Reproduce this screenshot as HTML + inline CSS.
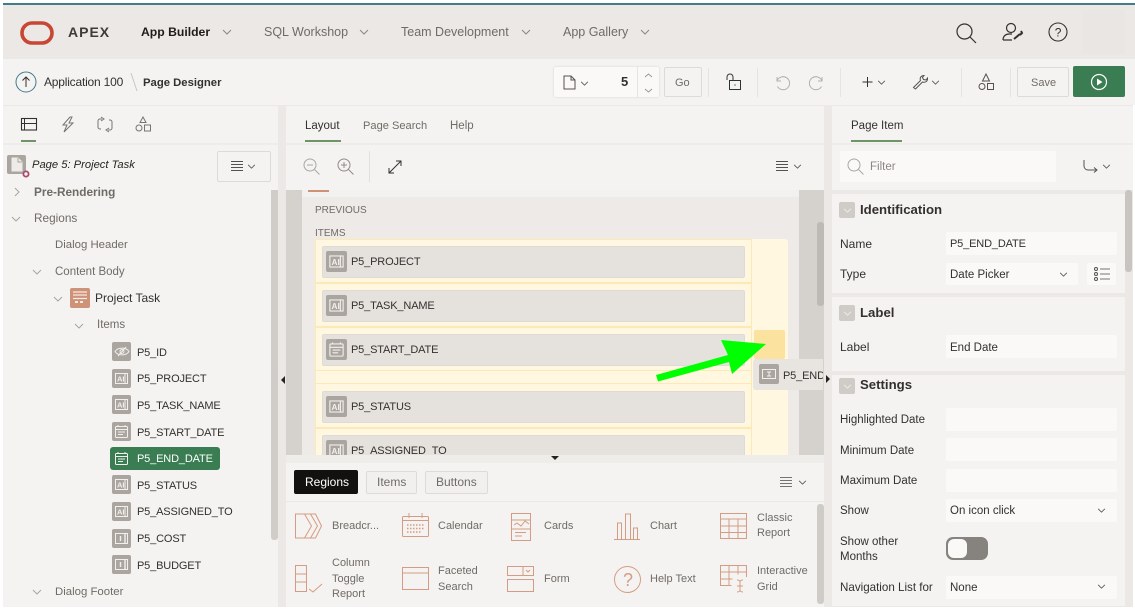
<!DOCTYPE html>
<html><head><meta charset="utf-8"><style>
html,body{margin:0;padding:0;background:#fff}
body{width:1135px;height:612px;position:relative;overflow:hidden;font-family:"Liberation Sans",sans-serif;font-size:12px;color:#33302e}
div,svg,span.a{position:absolute}
.t{position:absolute;white-space:nowrap;line-height:16px}
.u{font-size:11px;letter-spacing:-.15px;margin-top:1px}
.g{color:#6f6b67}
.b{font-weight:bold}
.ic{width:19px;height:19px;background:#aaa59e;border-radius:2px}
.item{background:#e5e2de;border:1px solid #dedad6;border-radius:2px;left:322px;width:421px;height:30px}
.f{background:#fbf9f8;border-radius:2px;left:946px;width:171px;height:23px}
.bt{background:#f2f0ee;border:1px solid #dedbd7;border-radius:2px;box-sizing:border-box}
.sep{width:1px;background:#e6e3e0;top:68px;height:29px}
svg{fill:none;stroke:#55514d;stroke-width:1;overflow:visible}
</style></head><body>
<svg width="0" height="0" style="position:absolute"><defs>
<symbol id="ai" viewBox="0 0 19 19"><rect x="3.5" y="4.5" width="12" height="10" fill="none" stroke="#f2f0ee"/><path d="M13 4v11" stroke="#f2f0ee"/><text x="5" y="12.5" font-size="7.5" font-family="Liberation Sans" font-weight="bold" fill="#f2f0ee" stroke="none">AI</text></symbol>
<symbol id="n1" viewBox="0 0 19 19"><rect x="3.5" y="4.5" width="12" height="10" fill="none" stroke="#f2f0ee"/><path d="M13 4v11M8.5 7v5" stroke="#f2f0ee" stroke-width="1.4"/></symbol>
<symbol id="cal" viewBox="0 0 19 19"><rect x="3.5" y="4.500" width="12" height="11" rx="1" fill="none" stroke="#f2f0ee"/><path d="M3.5 7.500h12M6 3v2M13 3v2M6 10h7M6 12.500h5" stroke="#f2f0ee"/></symbol>
<symbol id="chev" viewBox="0 0 10 6"><path d="M1 1l4 4 4-4"/></symbol>
</defs></svg>

<!-- header -->
<div style="left:3px;top:3px;width:1132px;height:2px;background:#3f7c8c"></div>
<div style="left:3px;top:5px;width:1132px;height:54px;background:#ece8e5"></div>
<div style="left:1082px;top:10px;width:43px;height:44px;background:#eae6e3"></div>
<svg style="left:20px;top:21px" width="36" height="24"><rect x="2" y="2" width="30" height="20" rx="10" style="stroke:#c74634;stroke-width:3.6"/></svg>
<div class="t b" style="left:68px;top:24px;font-size:14px;letter-spacing:1px;color:#3f3b38">APEX</div>
<div class="t b" style="left:141px;top:24px;font-size:12.2px;color:#1f1c1a">App Builder</div>
<svg style="left:222px;top:29px" width="10" height="6"><use href="#chev" width="10" height="6" style="stroke:#8a8682"/></svg>
<div class="t g" style="left:264px;top:24px;font-size:12.5px">SQL Workshop</div>
<svg style="left:359px;top:29px" width="10" height="6"><use href="#chev" width="10" height="6" style="stroke:#8a8682"/></svg>
<div class="t g" style="left:401px;top:24px;font-size:12.5px">Team Development</div>
<svg style="left:521px;top:29px" width="10" height="6"><use href="#chev" width="10" height="6" style="stroke:#8a8682"/></svg>
<div class="t g" style="left:563px;top:24px;font-size:12.5px">App Gallery</div>
<svg style="left:640px;top:29px" width="10" height="6"><use href="#chev" width="10" height="6" style="stroke:#8a8682"/></svg>
<svg style="left:955px;top:22px" width="22" height="22"><circle cx="9.5" cy="9.5" r="7.5" style="stroke:#33302e;stroke-width:1.2"/><path d="M15 15l6 6" style="stroke:#33302e;stroke-width:1.2"/></svg>
<svg style="left:1002px;top:22px" width="22" height="20"><circle cx="9" cy="6" r="4.5" style="stroke:#33302e;stroke-width:1.2"/><path d="M1 18c0-4 3-6 6-6h3M1 18h9" style="stroke:#33302e;stroke-width:1.2"/><path d="M12 17l6-5M19 9l1 2-2 2" style="stroke:#33302e;stroke-width:2"/></svg>
<svg style="left:1048px;top:22px" width="21" height="21"><circle cx="10" cy="10" r="9" style="stroke:#33302e;stroke-width:1.1"/><text x="6.7" y="14.5" font-size="12" font-family="Liberation Sans" fill="#33302e" stroke="none">?</text></svg>

<!-- toolbar -->
<div style="left:3px;top:59px;width:1132px;height:46px;background:#f5f3f1"></div>
<svg style="left:15px;top:71px" width="22" height="22"><circle cx="11" cy="11" r="10" style="stroke:#3f7c8c"/><path d="M11 16V6M7.5 9.500L11 6l3.500 3.500" style="stroke:#33302e"/></svg>
<div class="t" style="left:44px;top:74px;font-size:12px;letter-spacing:-.2px">Application 100</div>
<svg style="left:130px;top:72px" width="8" height="20"><path d="M1 1l6 18" style="stroke:#c9c5c1"/></svg>
<div class="t b" style="left:143px;top:75px;font-size:11.3px">Page Designer</div>
<div style="left:554px;top:67px;width:105px;height:30px;background:#fbf9f8;box-shadow:0 0 2px #d5d2ce;border-radius:2px"></div>
<div style="left:637px;top:67px;width:1px;height:30px;background:#e6e3e0"></div>
<svg style="left:563px;top:75px" width="13" height="15"><path d="M1 1h7l4 4v9H1z M8 1v4h4" style="stroke:#55514d"/></svg>
<svg style="left:580px;top:81px" width="9" height="5"><use href="#chev" width="9" height="5"/></svg>
<div class="t b" style="left:621px;top:74px;font-size:13px">5</div>
<svg style="left:644px;top:72px" width="9" height="22"><path d="M1 5l3.500-3L8 5M1 17l3.500 3L8 17" style="stroke:#9b9793"/></svg>
<div class="bt" style="left:664px;top:67px;width:38px;height:30px;background:#f5f3f1"></div>
<div class="t g" style="left:675px;top:75px;font-size:11px">Go</div>
<div class="sep" style="left:708px"></div>
<svg style="left:726px;top:73px" width="16" height="18"><path d="M1 7V4a3 3 0 0 1 6 0v3" style="stroke:#33302e"/><rect x="3.500" y="7.500" width="11" height="9" style="stroke:#33302e"/><circle cx="9" cy="12" r=".8" style="fill:#3f7c8c;stroke:none"/></svg>
<div class="sep" style="left:757px"></div>
<svg style="left:774px;top:74px" width="17" height="17"><path d="M3 3v4h4M3 7a6.500 6.500 0 1 1 .5 5.500" style="stroke:#b3afab"/></svg>
<svg style="left:808px;top:74px" width="17" height="17"><path d="M14 3v4h-4M14 7a6.500 6.500 0 1 0-.5 5.500" style="stroke:#b3afab"/></svg>
<div class="sep" style="left:840px"></div>
<svg style="left:862px;top:77px" width="11" height="11"><path d="M5.500 0v10M.5 5h10" style="stroke:#33302e"/></svg>
<svg style="left:877px;top:80px" width="9" height="5"><use href="#chev" width="9" height="5"/></svg>
<svg style="left:912px;top:74px" width="17" height="17"><path d="M1.500 13.500l7-7c-1-2.500 .5-5 3.500-5l-1.500 2 1 2 2.500 .5 1.500-2c.5 3-2 5-5 4l-7 7z" style="stroke:#55514d"/></svg>
<svg style="left:931px;top:80px" width="9" height="5"><use href="#chev" width="9" height="5"/></svg>
<div class="sep" style="left:961px"></div>
<svg style="left:978px;top:73px" width="17" height="18"><path d="M8 1l3.500 7h-7z M9.500 10.500h6v6h-6z"/><circle cx="4" cy="13.500" r="3"/></svg>
<div class="sep" style="left:1010px"></div>
<div class="bt" style="left:1017px;top:67px;width:52px;height:30px;background:#f5f3f1"></div>
<div class="t g" style="left:1031px;top:75px;font-size:11px">Save</div>
<div style="left:1073px;top:66px;width:52px;height:31px;background:#3a7d53;border-radius:2px"></div>
<svg style="left:1090px;top:73px" width="18" height="18"><circle cx="9" cy="9" r="7.500" style="stroke:#fff;stroke-width:1.200"/><path d="M7 5.500v7l5.500-3.500z" style="fill:#fff;stroke:none"/></svg>

<!-- backdrop -->
<div style="left:3px;top:105px;width:1130px;height:502px;background:#ebe8e5"></div>

<!-- left panel -->
<div style="left:3px;top:106px;width:275px;height:501px;background:#f5f3f1"></div>
<div style="left:3px;top:143px;width:275px;height:2px;background:#eeebe8"></div>
<svg style="left:21px;top:118px" width="16" height="13"><rect x=".5" y=".5" width="15" height="11.500" style="stroke:#33302e;stroke-width:1.100"/><path d="M1 5.500h14M3.500 1v11" style="stroke:#33302e"/></svg>
<div style="left:21px;top:140px;width:15px;height:2px;background:#6e9468"></div>
<svg style="left:61px;top:116px" width="14" height="17"><path d="M9 1L2 9h4l-3 7 9-9H8l3-6z" style="stroke:#77736f"/></svg>
<svg style="left:97px;top:117px" width="16" height="15"><path d="M5 2H3a2 2 0 0 0-2 2v6a2 2 0 0 0 2 2h1M11 13h2a2 2 0 0 0 2-2V5a2 2 0 0 0-2-2h-1M4 0l3 2-3 2M12 11l-3 2 3 2" style="stroke:#77736f"/></svg>
<svg style="left:135px;top:116px" width="16" height="16"><path d="M8 1l3 5.500H5z M9.500 9h6v6h-6z" style="stroke:#77736f"/><circle cx="4" cy="12" r="3" style="stroke:#77736f"/></svg>
<div style="left:7px;top:155px;width:19px;height:19px;background:#aaa59e;border-radius:2px"></div>
<svg style="left:11px;top:157px" width="12" height="15"><path d="M1 1h6l4 4v9H1z" style="fill:#eeebe8;stroke:#eeebe8"/><path d="M7 1v4h4" style="stroke:#aaa59e"/></svg>
<svg style="left:22px;top:170px" width="8" height="8"><circle cx="4" cy="4" r="2.600" style="fill:#f5f3f1;stroke:#b0466a;stroke-width:1.800"/></svg>
<div class="t" style="left:32px;top:157px;font-style:italic;font-size:11.200px;color:#26231f">Page 5: Project Task</div>
<div class="bt" style="left:217px;top:151px;width:54px;height:31px;background:#f5f3f1"></div>
<svg style="left:231px;top:161px" width="12" height="11"><path d="M0 .5h12M0 3.500h12M0 6.500h12M0 9.500h12"/></svg>
<svg style="left:247px;top:164px" width="9" height="5"><use href="#chev" width="9" height="5"/></svg>
<div style="left:271px;top:190px;width:7px;height:350px;background:#d0cdc9;border-radius:0 0 3px 3px"></div>
<svg style="left:14px;top:187px" width="6" height="10"><path d="M1 1l4 4-4 4" style="stroke:#a8a4a0"/></svg>
<div class="t b g" style="left:34px;top:184px;font-size:11.800px">Pre-Rendering</div>
<svg style="left:11px;top:216px" width="10" height="6"><use href="#chev" width="10" height="6" style="stroke:#a8a4a0"/></svg>
<div class="t g" style="left:34px;top:210px;font-size:11.800px">Regions</div>
<div class="t g" style="left:55px;top:237px;font-size:11.400px">Dialog Header</div>
<svg style="left:32px;top:269px" width="10" height="6"><use href="#chev" width="10" height="6" style="stroke:#a8a4a0"/></svg>
<div class="t g" style="left:55px;top:264px;font-size:11.500px">Content Body</div>
<svg style="left:53px;top:296px" width="10" height="6"><use href="#chev" width="10" height="6" style="stroke:#a8a4a0"/></svg>
<div style="left:70px;top:288px;width:20px;height:20px;background:#cd9277;border-radius:2px"></div>
<svg style="left:73px;top:291px" width="14" height="14"><path d="M0 1h14M0 4h14M0 7.500h14" style="stroke:#f7eae3;stroke-width:1.200"/><path d="M2 11h3M7 11h3" style="stroke:#f7eae3;stroke-width:2"/></svg>
<div class="t" style="left:95px;top:290px">Project Task</div>
<svg style="left:74px;top:323px" width="10" height="6"><use href="#chev" width="10" height="6" style="stroke:#a8a4a0"/></svg>
<div class="t g" style="left:97px;top:317px;font-size:11.500px">Items</div>

<div class="ic" style="left:112px;top:342px"></div>
<svg style="left:114px;top:346px" width="16" height="11"><path d="M1 5.500C4 1 12 1 15 5.500 12 10 4 10 1 5.500zM4 10L12 1" style="stroke:#f2f0ee"/><circle cx="8" cy="5.500" r="2" style="stroke:#f2f0ee"/></svg>
<div class="t u" style="left:137px;top:344px">P5_ID</div>
<div class="ic" style="left:112px;top:369px"></div><svg style="left:112px;top:369px" width="19" height="19"><use href="#ai" width="19" height="19"/></svg>
<div class="t u" style="left:137px;top:370px">P5_PROJECT</div>
<div class="ic" style="left:112px;top:395px"></div><svg style="left:112px;top:395px" width="19" height="19"><use href="#ai" width="19" height="19"/></svg>
<div class="t u" style="left:137px;top:397px">P5_TASK_NAME</div>
<div class="ic" style="left:112px;top:422px"></div><svg style="left:112px;top:422px" width="19" height="19"><use href="#cal" width="19" height="19"/></svg>
<div class="t u" style="left:137px;top:424px">P5_START_DATE</div>
<div style="left:110px;top:447px;width:110px;height:23px;background:#3a7d53;border-radius:3px"></div>
<svg style="left:112px;top:449px" width="19" height="19"><use href="#cal" width="19" height="19"/></svg>
<div class="t u" style="left:137px;top:450px;color:#fff">P5_END_DATE</div>
<div class="ic" style="left:112px;top:475px"></div><svg style="left:112px;top:475px" width="19" height="19"><use href="#ai" width="19" height="19"/></svg>
<div class="t u" style="left:137px;top:477px">P5_STATUS</div>
<div class="ic" style="left:112px;top:502px"></div><svg style="left:112px;top:502px" width="19" height="19"><use href="#ai" width="19" height="19"/></svg>
<div class="t u" style="left:137px;top:503px">P5_ASSIGNED_TO</div>
<div class="ic" style="left:112px;top:529px"></div><svg style="left:112px;top:529px" width="19" height="19"><use href="#n1" width="19" height="19"/></svg>
<div class="t u" style="left:137px;top:530px">P5_COST</div>
<div class="ic" style="left:112px;top:555px"></div><svg style="left:112px;top:555px" width="19" height="19"><use href="#n1" width="19" height="19"/></svg>
<div class="t u" style="left:137px;top:557px">P5_BUDGET</div>
<svg style="left:32px;top:589px" width="10" height="6"><use href="#chev" width="10" height="6" style="stroke:#a8a4a0"/></svg>
<div class="t g" style="left:55px;top:584px;font-size:11.400px">Dialog Footer</div>
<svg style="left:281px;top:376px" width="5" height="8"><path d="M4 0v8L0 4z" style="fill:#26231f;stroke:none"/></svg>

<!-- center -->
<div style="left:286px;top:106px;width:538px;height:84px;background:#f5f3f1"></div>
<div style="left:286px;top:143px;width:538px;height:2px;background:#eeebe8"></div>
<div class="t" style="left:305px;top:118px;font-size:11.500px">Layout</div>
<div style="left:305px;top:140px;width:36px;height:2px;background:#6e9468"></div>
<div class="t g" style="left:363px;top:118px;font-size:11.100px">Page Search</div>
<div class="t g" style="left:450px;top:118px;font-size:11.500px">Help</div>
<svg style="left:303px;top:158px" width="17" height="17"><circle cx="7" cy="7" r="6" style="stroke:#aaa6a2"/><path d="M11.500 11.500l5 5M4 7h6" style="stroke:#aaa6a2"/></svg>
<svg style="left:337px;top:158px" width="17" height="17"><circle cx="7" cy="7" r="6" style="stroke:#8f8b87"/><path d="M11.500 11.500l5 5M4 7h6M7 4v6" style="stroke:#8f8b87"/></svg>
<div style="left:369px;top:151px;width:1px;height:31px;background:#e2dfdc"></div>
<svg style="left:388px;top:160px" width="14" height="14"><path d="M1 13L13 1M8 1h5v5M1 8v5h5" style="stroke:#33302e"/></svg>
<svg style="left:776px;top:161px" width="12" height="11"><path d="M0 .5h12M0 3.500h12M0 6.500h12M0 9.500h12"/></svg>
<svg style="left:793px;top:164px" width="9" height="5"><use href="#chev" width="9" height="5"/></svg>

<div style="left:286px;top:190px;width:538px;height:265px;background:#d5d1cd"></div>
<div style="left:302px;top:190px;width:497px;height:265px;background:#eeeae7"></div>
<div style="left:302px;top:190px;width:497px;height:7px;background:#f3f1ef"></div>
<div style="left:308px;top:190px;width:21px;height:2px;background:#cd9277"></div>
<div style="left:817px;top:222px;width:7px;height:84px;background:#bdbab6;border-radius:3px"></div>
<div class="t g" style="left:315px;top:203px;font-size:10px">PREVIOUS</div>
<div class="t g" style="left:315px;top:226px;font-size:10px">ITEMS</div>
<div style="left:315px;top:239px;width:473px;height:216px;background:#fff7e0;border-radius:3px 3px 0 0;overflow:hidden"></div>
<div style="left:315px;top:239px;width:436px;height:1px;background:#fde9b5"></div>
<div style="left:751px;top:239px;width:1px;height:216px;background:#fde9b5"></div>
<div style="left:315px;top:239px;width:1px;height:216px;background:#fde9b5"></div>
<div style="left:315px;top:282px;width:436px;height:2px;background:#fde9b5"></div>
<div style="left:315px;top:326px;width:436px;height:2px;background:#fde9b5"></div>
<div style="left:315px;top:370px;width:436px;height:1px;background:#fde9b5"></div>
<div style="left:315px;top:383px;width:436px;height:1px;background:#fde9b5"></div>
<div style="left:315px;top:427px;width:436px;height:2px;background:#fde9b5"></div>

<div class="item" style="top:246px"></div>
<div class="ic" style="left:326px;top:251px;width:21px;height:21px"></div><svg style="left:326px;top:251px" width="21" height="21"><use href="#ai" width="21" height="21"/></svg>
<div class="t u" style="left:351px;top:253px">P5_PROJECT</div>
<div class="item" style="top:290px"></div>
<div class="ic" style="left:326px;top:295px;width:21px;height:21px"></div><svg style="left:326px;top:295px" width="21" height="21"><use href="#ai" width="21" height="21"/></svg>
<div class="t u" style="left:351px;top:297px">P5_TASK_NAME</div>
<div class="item" style="top:334px"></div>
<div class="ic" style="left:326px;top:339px;width:21px;height:21px"></div><svg style="left:326px;top:339px" width="21" height="21"><use href="#cal" width="21" height="21"/></svg>
<div class="t u" style="left:351px;top:341px">P5_START_DATE</div>
<div class="item" style="top:391px"></div>
<div class="ic" style="left:326px;top:396px;width:21px;height:21px"></div><svg style="left:326px;top:396px" width="21" height="21"><use href="#ai" width="21" height="21"/></svg>
<div class="t u" style="left:351px;top:398px">P5_STATUS</div>
<div class="item" style="top:435px;height:20px;border-bottom:0"></div>
<div style="left:326px;top:440px;width:21px;height:15px;overflow:hidden"><div class="ic" style="left:0;top:0;width:21px;height:21px"></div><svg style="left:0;top:0" width="21" height="21"><use href="#ai" width="21" height="21"/></svg></div>
<div class="t u" style="left:351px;top:442px">P5_ASSIGNED_TO</div>

<div style="left:754px;top:330px;width:31px;height:29px;background:#fbe29e;border-radius:2px"></div>
<div style="left:753px;top:359px;width:70px;height:31px;background:#e8e5e1;border-radius:3px 0 0 3px"></div>
<div class="ic" style="left:759px;top:364px;width:20px;height:20px"></div>
<svg style="left:759px;top:364px" width="20" height="20"><rect x="3.500" y="5.500" width="13" height="9" style="stroke:#f2f0ee"/><path d="M8 8h4M10 8v4M8 12h4" style="stroke:#f2f0ee"/></svg>
<div style="left:783px;top:367px;width:40px;height:17px;overflow:hidden"><div class="t u" style="left:0;top:0">P5_END_DATE</div></div>
<svg style="left:826px;top:375px" width="5" height="8"><path d="M0 0v8l4-4z" style="fill:#26231f;stroke:none"/></svg>
<svg style="left:650px;top:335px" width="125" height="55"><path d="M8 46.500L6 40 78 20 71 5 116 9 82 39 79 27z" style="fill:#00ff00;stroke:none"/></svg>

<div style="left:286px;top:455px;width:538px;height:8px;background:#efedea"></div>
<svg style="left:551px;top:456px" width="8" height="5"><path d="M0 0h8L4 4z" style="fill:#26231f;stroke:none"/></svg>

<!-- gallery -->
<div style="left:286px;top:463px;width:538px;height:144px;background:#f5f3f1"></div>
<div style="left:286px;top:501px;width:538px;height:1px;background:#ebe8e5"></div>
<div style="left:294px;top:470px;width:64px;height:24px;background:#131110;border-radius:2px"></div>
<div class="t" style="left:305px;top:474px;color:#fff">Regions</div>
<div class="bt" style="left:366px;top:471px;width:51px;height:23px"></div>
<div class="t g" style="left:377px;top:474px">Items</div>
<div class="bt" style="left:425px;top:471px;width:63px;height:23px"></div>
<div class="t g" style="left:436px;top:474px">Buttons</div>
<svg style="left:780px;top:477px" width="12" height="11"><path d="M0 .5h12M0 3.500h12M0 6.500h12M0 9.500h12" style="stroke:#77736f"/></svg>
<svg style="left:798px;top:480px" width="9" height="5"><use href="#chev" width="9" height="5"/></svg>
<div style="left:817px;top:504px;width:7px;height:100px;background:#cfccc8;border-radius:3px"></div>

<svg style="left:295px;top:513px" width="28" height="26"><path d="M.5 1h9l7 12-7 12h-9zM9.500 1h6l7 12-7 12h-6M15.500 1h5l6 12-6 12h-5" style="stroke:#d49c82"/></svg>
<div class="t g" style="left:332px;top:518px;font-size:11px">Breadcr...</div>
<svg style="left:402px;top:513px" width="27" height="24"><rect x=".5" y="3.500" width="26" height="20" rx="1" style="stroke:#d49c82"/><path d="M.5 7.500h26M7 0v5M20 0v5" style="stroke:#d49c82"/><path d="M5 12h17M5 15.500h17M5 19h14" style="stroke:#d49c82;stroke-width:1.500;stroke-dasharray:1.500 1.500"/></svg>
<div class="t g" style="left:438px;top:518px;font-size:11px">Calendar</div>
<svg style="left:511px;top:513px" width="20" height="24"><rect x=".5" y=".5" width="19" height="27" style="stroke:#d49c82"/><path d="M.5 7h19M.5 16h19M3 12l3-2 4 3 4-5 4 3M4 19.500h11M4 23h7" style="stroke:#d49c82"/></svg>
<div class="t g" style="left:544px;top:518px;font-size:11px">Cards</div>
<svg style="left:614px;top:513px" width="27" height="27"><path d="M0 26.500h26M3.500 26V10h4v16M11.500 26V1h5v25M19.500 26V15h4v11" style="stroke:#d49c82"/></svg>
<div class="t g" style="left:650px;top:518px;font-size:11px">Chart</div>
<svg style="left:720px;top:513px" width="27" height="26"><rect x=".5" y=".5" width="26" height="25" style="stroke:#d49c82"/><path d="M.5 6h26M.5 13h26M.5 19.500h26M9 6v19.500M18 6v19.500" style="stroke:#d49c82"/></svg>
<div class="t g" style="left:757px;top:511px;font-size:11px;line-height:15px">Classic<br>Report</div>

<svg style="left:295px;top:565px" width="32" height="28"><rect x=".5" y=".5" width="11" height="26" style="stroke:#d49c82"/><path d="M.5 9h11M.5 17h11M14 24l4 3 9-8" style="stroke:#d49c82"/></svg>
<div class="t g" style="left:332px;top:556px;font-size:11px;line-height:15.500px">Column<br>Toggle<br>Report</div>
<svg style="left:402px;top:567px" width="27" height="24"><rect x=".5" y=".5" width="26" height="22" style="stroke:#d49c82"/><path d="M.5 6h26" style="stroke:#d49c82"/></svg>
<div class="t g" style="left:438px;top:564px;font-size:11px;line-height:15.500px">Faceted<br>Search</div>
<svg style="left:507px;top:566px" width="28" height="27"><rect x=".5" y=".5" width="26" height="9" style="stroke:#d49c82"/><rect x=".5" y="13.500" width="26" height="12" style="stroke:#d49c82"/><path d="M16 .5v9M19 4l2 2 2-2" style="stroke:#d49c82"/></svg>
<div class="t g" style="left:544px;top:571px;font-size:11px">Form</div>
<svg style="left:614px;top:566px" width="27" height="27"><circle cx="13.500" cy="13.500" r="13" style="stroke:#d49c82"/><text x="9" y="20" font-size="18" font-family="Liberation Sans" fill="#d49c82" stroke="none">?</text></svg>
<div class="t g" style="left:650px;top:571px;font-size:11px">Help Text</div>
<svg style="left:720px;top:565px" width="28" height="28"><path d="M26.500 12V.5H.5v20h11M.5 7h26M9 .5v20M18 .5v9M.5 14h12" style="stroke:#d49c82"/><path d="M17 15c2 0 3 1 3 2v8c0 1-1 2-3 2M23 15c-2 0-3 1-3 2M23 27c-2 0-3-1-3-2M17 21h6" style="stroke:#d49c82"/></svg>
<div class="t g" style="left:757px;top:564px;font-size:11px;line-height:15.500px">Interactive<br>Grid</div>

<!-- right panel -->
<div style="left:832px;top:106px;width:301px;height:84px;background:#f5f3f1"></div>
<div style="left:832px;top:143px;width:301px;height:2px;background:#eeebe8"></div>
<div class="t" style="left:851px;top:118px;font-size:11.500px">Page Item</div>
<div style="left:851px;top:140px;width:51px;height:2px;background:#6e9468"></div>
<div style="left:840px;top:151px;width:216px;height:31px;background:#fbf9f8;border-radius:2px"></div>
<svg style="left:847px;top:158px" width="17" height="17"><circle cx="7" cy="7" r="6" style="stroke:#aaa6a2"/><path d="M11.500 11.500l5 5" style="stroke:#aaa6a2"/></svg>
<div class="t" style="left:870px;top:159px;color:#8a8682;font-size:11.500px">Filter</div>
<svg style="left:1083px;top:160px" width="15" height="13"><path d="M1 0v6a4 4 0 0 0 4 4h9M11 7.500l3 2.500-3 2.500"/></svg>
<svg style="left:1102px;top:164px" width="9" height="5"><use href="#chev" width="9" height="5"/></svg>
<div style="left:1125px;top:190px;width:7px;height:82px;background:#c8c5c1;border-radius:3px"></div>

<div style="left:832px;top:194px;width:293px;height:99px;background:#f5f3f1"></div>
<div style="left:832px;top:297px;width:293px;height:74px;background:#f5f3f1"></div>
<div style="left:832px;top:375px;width:293px;height:231px;background:#f5f3f1"></div>

<div style="left:839px;top:202px;width:16px;height:16px;background:#cfccc8;border-radius:2px"></div>
<svg style="left:843px;top:208px" width="9" height="5"><use href="#chev" width="9" height="5" style="stroke:#f2f0ee"/></svg>
<div class="t b" style="left:860px;top:202px;font-size:13.200px">Identification</div>
<div class="t" style="left:840px;top:236px">Name</div>
<div class="f" style="top:232px"></div>
<div class="t u" style="left:950px;top:235px">P5_END_DATE</div>
<div class="t" style="left:840px;top:266px">Type</div>
<div class="f" style="top:263px;width:132px;height:22px"></div>
<div class="t" style="left:950px;top:267px;font-size:11.500px">Date Picker</div>
<svg style="left:1059px;top:272px" width="9" height="5"><use href="#chev" width="9" height="5"/></svg>
<div style="left:1087px;top:263px;width:29px;height:22px;background:#fbf9f8;border-radius:2px"></div>
<svg style="left:1094px;top:267px" width="16" height="14"><circle cx="2" cy="2" r="1.500"/><circle cx="2" cy="7" r="1.500"/><circle cx="2" cy="12" r="1.500"/><path d="M6 2h10M6 7h10M6 12h10" style="stroke:#77736f"/></svg>

<div style="left:839px;top:305px;width:16px;height:16px;background:#cfccc8;border-radius:2px"></div>
<svg style="left:843px;top:311px" width="9" height="5"><use href="#chev" width="9" height="5" style="stroke:#f2f0ee"/></svg>
<div class="t b" style="left:860px;top:305px;font-size:13.200px">Label</div>
<div class="t" style="left:840px;top:339px">Label</div>
<div class="f" style="top:335px"></div>
<div class="t" style="left:950px;top:340px;font-size:11.500px">End Date</div>

<div style="left:839px;top:378px;width:16px;height:16px;background:#cfccc8;border-radius:2px"></div>
<svg style="left:843px;top:384px" width="9" height="5"><use href="#chev" width="9" height="5" style="stroke:#f2f0ee"/></svg>
<div class="t b" style="left:860px;top:377px;font-size:13.200px">Settings</div>
<div class="t" style="left:840px;top:412px;font-size:11.500px">Highlighted Date</div>
<div class="f" style="top:408px"></div>
<div class="t" style="left:840px;top:443px;font-size:11.500px">Minimum Date</div>
<div class="f" style="top:438px"></div>
<div class="t" style="left:840px;top:473px;font-size:11.500px">Maximum Date</div>
<div class="f" style="top:469px"></div>
<div class="t" style="left:840px;top:503px;font-size:11.500px">Show</div>
<div class="f" style="top:499px"></div>
<div class="t" style="left:950px;top:503px;font-size:11.500px">On icon click</div>
<svg style="left:1097px;top:508px" width="9" height="5"><use href="#chev" width="9" height="5"/></svg>
<div class="t" style="left:840px;top:534px;font-size:11.500px">Show other</div>
<div class="t" style="left:840px;top:549px;font-size:11.500px">Months</div>
<div style="left:946px;top:537px;width:42px;height:23px;background:#86827d;border-radius:7px"></div>
<div style="left:948px;top:539px;width:19px;height:19px;background:#fbf9f8;border-radius:6px"></div>
<div class="t" style="left:840px;top:580px;font-size:11.600px">Navigation List for</div>
<div class="f" style="top:576px"></div>
<div class="t" style="left:950px;top:580px;font-size:11.500px">None</div>
<svg style="left:1097px;top:584px" width="9" height="5"><use href="#chev" width="9" height="5"/></svg>
</body></html>
